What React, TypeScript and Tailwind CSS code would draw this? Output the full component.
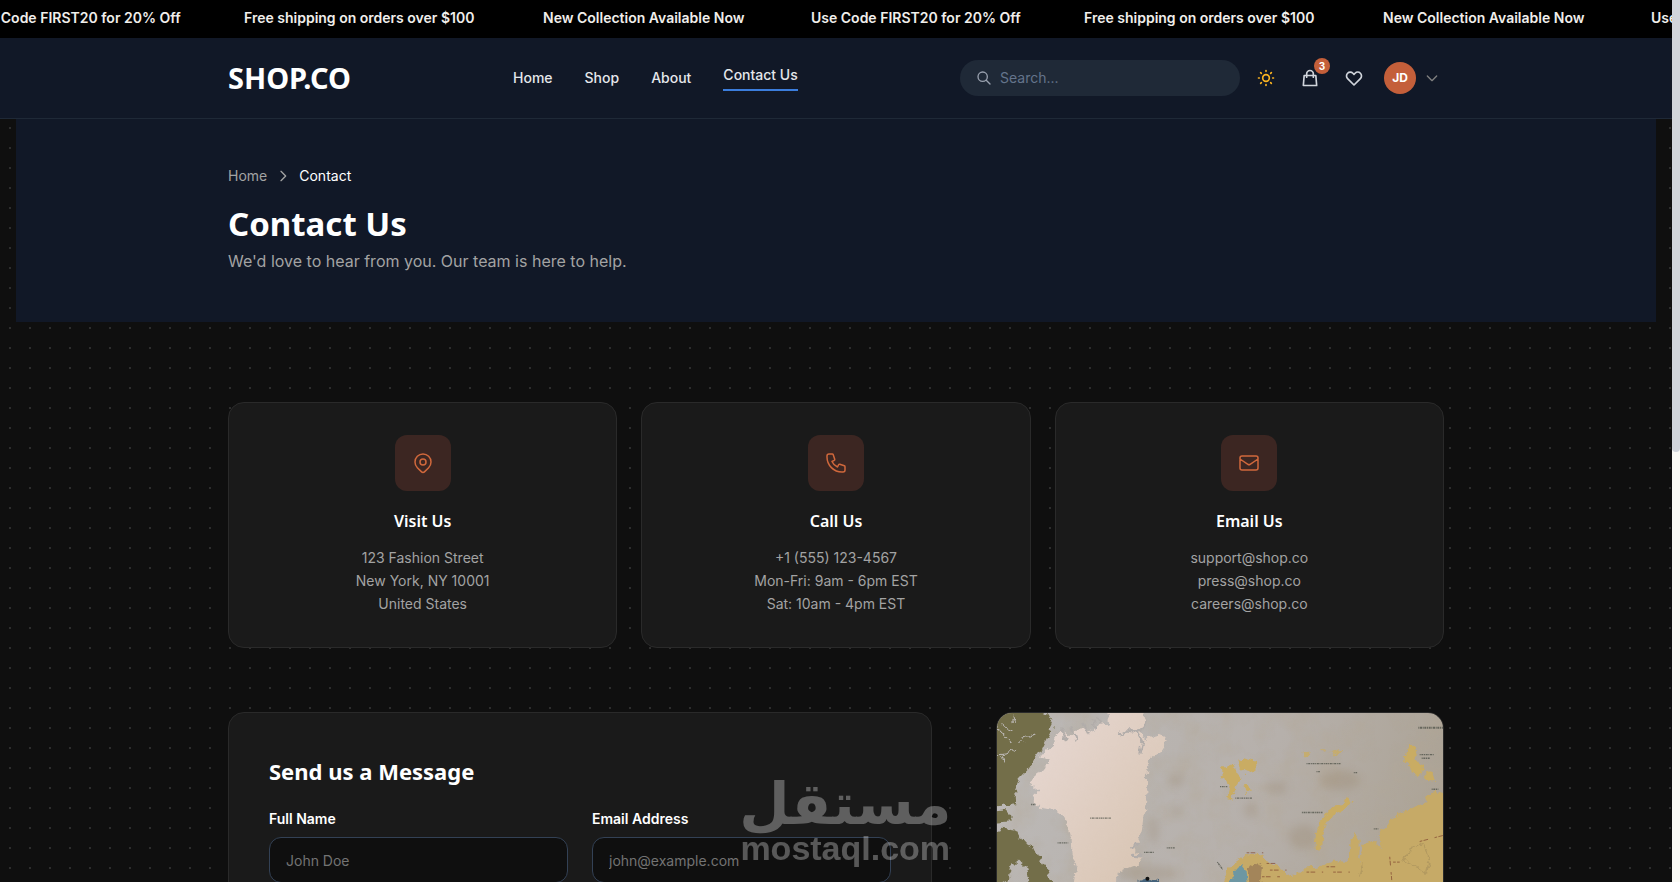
import { useState } from "react";
import type { ReactNode } from "react";
import {
  HiOutlineChevronDown,
  HiOutlineChevronRight,
  HiOutlineHeart,
  HiOutlineLocationMarker,
  HiOutlineMail,
  HiOutlinePhone,
  HiOutlineSearch,
  HiOutlineShoppingBag,
  HiOutlineSun,
} from "react-icons/hi";

const promos = [
  { text: "Use Code FIRST20 for 20% Off", width: "w-[273px]" },
  { text: "Free shipping on orders over $100", width: "w-[299px]" },
  { text: "New Collection Available Now", width: "w-[268px]" },
];

const navLinks = [
  { label: "Home", href: "#home" },
  { label: "Shop", href: "#shop" },
  { label: "About", href: "#about" },
  { label: "Contact Us", href: "#contact", active: true },
];

const contactCards = [
  {
    title: "Visit Us",
    icon: <HiOutlineLocationMarker className="size-6 [&_path]:stroke-[1.5]" />,
    lines: ["123 Fashion Street", "New York, NY 10001", "United States"],
  },
  {
    title: "Call Us",
    icon: <HiOutlinePhone className="size-6 [&_path]:stroke-[1.5]" />,
    lines: ["+1 (555) 123-4567", "Mon-Fri: 9am - 6pm EST", "Sat: 10am - 4pm EST"],
  },
  {
    title: "Email Us",
    icon: <HiOutlineMail className="size-6 [&_path]:stroke-[1.5]" />,
    lines: ["support@shop.co", "press@shop.co", "careers@shop.co"],
  },
];

function PromoBar() {
  return (
    <div className="h-[38px] overflow-hidden bg-black">
      <div className="-ml-[29px] flex h-9 w-max items-center text-sm font-semibold text-[#f0eeeb]">
        {[...promos, ...promos, promos[0]].map((promo, i) => (
          <span key={i} className={`shrink-0 whitespace-nowrap ${promo.width}`}>
            {promo.text}
          </span>
        ))}
      </div>
    </div>
  );
}

function IconButton({ label, children }: { label: string; children: ReactNode }) {
  return (
    <button type="button" aria-label={label} className="relative rounded-full p-2">
      {children}
    </button>
  );
}

function Header() {
  return (
    <header className="border-b border-[#1f2937] bg-[#111827]">
      <div className="mx-auto flex h-20 max-w-7xl items-center justify-between px-8">
        <a href="#home" className="w-[285px] font-['Noto_Sans'] text-[29px] font-bold text-white">
          SHOP.CO
        </a>
        <nav className="flex flex-1 items-center gap-8 text-sm font-medium text-gray-200">
          {navLinks.map((link) => (
            <a
              key={link.label}
              href={link.href}
              className={link.active ? "border-b-2 border-[#3b7ddd] pb-1" : ""}
            >
              {link.label}
            </a>
          ))}
        </nav>
        <div className="flex items-center gap-2">
          <label className="flex h-9 w-[280px] items-center gap-2 rounded-full bg-[#1f2937] px-4 text-gray-400">
            <HiOutlineSearch className="size-4 shrink-0" />
            <input
              type="search"
              aria-label="Search"
              placeholder="Search..."
              className="w-full bg-transparent text-sm text-white outline-none placeholder:text-[#64748b]"
            />
          </label>
          <IconButton label="Toggle theme">
            <HiOutlineSun className="size-5 text-[#fbb320]" />
          </IconButton>
          <IconButton label="Cart">
            <HiOutlineShoppingBag className="size-5 text-gray-300" />
            <span className="absolute -top-0.5 -right-0.5 flex size-4 items-center justify-center rounded-full bg-[#c45f3a] text-[10px] font-bold text-white">
              3
            </span>
          </IconButton>
          <IconButton label="Wishlist">
            <HiOutlineHeart className="size-5 text-gray-300" />
          </IconButton>
          <button type="button" aria-label="Account" className="flex items-center gap-2 p-1">
            <span className="flex size-8 items-center justify-center rounded-full bg-[#c45f3a] text-xs font-bold text-white">
              JD
            </span>
            <HiOutlineChevronDown className="size-4 text-[#808080]" />
          </button>
        </div>
      </div>
    </header>
  );
}

function Hero() {
  return (
    <section className="mx-4 bg-[#111827] py-12">
      <div className="mx-auto max-w-7xl px-8">
        <nav aria-label="Breadcrumb" className="flex items-center gap-2 text-sm leading-[18px]">
          <a href="#home" className="text-[#a3a3a3]">
            Home
          </a>
          <HiOutlineChevronRight className="size-4 text-[#a3a3a3]" />
          <span className="text-white">Contact</span>
        </nav>
        <h1 className="mt-4 mb-0.5 font-['Noto_Sans'] text-[33px] leading-[45px] font-bold text-white">Contact Us</h1>
        <p className="text-base leading-[26px] text-[#a3a3a3]">
          We'd love to hear from you. Our team is here to help.
        </p>
      </div>
    </section>
  );
}

function ContactCards() {
  return (
    <div className="grid grid-cols-3 gap-6">
      {contactCards.map((card) => (
        <div key={card.title} className="rounded-2xl border border-[#2a2a2a] bg-[#1a1a1a] p-8 text-center">
          <div className="mx-auto mb-4 flex size-14 items-center justify-center rounded-xl bg-[#3c2622] text-[#d0683c]">
            {card.icon}
          </div>
          <h3 className="mb-2.5 font-['Noto_Sans'] text-base leading-[29px] font-semibold text-white">{card.title}</h3>
          {card.lines.map((line) => (
            <p key={line} className="text-sm leading-[23px] text-[#a3a3a3]">
              {line}
            </p>
          ))}
        </div>
      ))}
    </div>
  );
}

function Field({ id, label, type, placeholder }: { id: string; label: string; type: string; placeholder: string }) {
  return (
    <div>
      <label htmlFor={id} className="mb-2 block text-sm font-semibold text-white">
        {label}
      </label>
      <input
        id={id}
        type={type}
        placeholder={placeholder}
        className="h-[46px] w-full rounded-xl border border-[#334155] bg-[#0f0f0f] px-4 text-sm text-white outline-none placeholder:text-[#737373]"
      />
    </div>
  );
}

function MessageForm() {
  const [sent, setSent] = useState(false);
  return (
    <form
      className="col-span-3 rounded-2xl border border-[#2a2a2a] bg-[#1a1a1a] p-10"
      onSubmit={(e) => {
        e.preventDefault();
        setSent(!sent);
      }}
    >
      <h2 className="mb-5 font-['Noto_Sans'] text-[22px] leading-9 font-bold text-white">Send us a Message</h2>
      <div className="grid grid-cols-2 gap-6 pb-40">
        <Field id="name" label="Full Name" type="text" placeholder="John Doe" />
        <Field id="email" label="Email Address" type="email" placeholder="john@example.com" />
      </div>
    </form>
  );
}

function VintageMap() {
  return (
    <svg
      role="img"
      aria-label="Map"
      viewBox="50 38 1340 1200"
      preserveAspectRatio="xMinYMin slice"
      className="h-full w-full"
    >
      <defs>
        <linearGradient id="sea" x1="0" y1="0" x2="1" y2="0.3">
          <stop offset="0" stopColor="#bcb9b7" />
          <stop offset="0.6" stopColor="#b6b0ab" />
          <stop offset="1" stopColor="#aba294" />
        </linearGradient>
        <linearGradient id="ice" x1="0" y1="0" x2="1" y2="1">
          <stop offset="0" stopColor="#e8d9d4" />
          <stop offset="1" stopColor="#d6c2ae" />
        </linearGradient>
        <filter id="soft" x="-50%" y="-50%" width="200%" height="200%">
          <feGaussianBlur stdDeviation="12" />
        </filter>
        <filter id="ragged" x="-5%" y="-5%" width="110%" height="110%" colorInterpolationFilters="sRGB">
          <feTurbulence type="fractalNoise" baseFrequency="0.05" numOctaves="3" seed="4" />
          <feDisplacementMap in="SourceGraphic" scale="24" xChannelSelector="R" yChannelSelector="G" />
        </filter>
        <filter id="paper" x="0" y="0" width="100%" height="100%">
          <feTurbulence type="fractalNoise" baseFrequency="0.012" numOctaves="5" seed="9" />
          <feColorMatrix values="0 0 0 0 0.45  0 0 0 0 0.38  0 0 0 0 0.28  0 0 0 1.4 -0.55" />
        </filter>
      </defs>
      <rect x="50" y="38" width="1340" height="1200" fill="url(#sea)" />
      <rect x="50" y="38" width="1340" height="1200" filter="url(#paper)" opacity="0.5" />
      <g fill="#8c7351" opacity="0.2" filter="url(#soft)">
        <ellipse cx="590" cy="240" rx="26" ry="20" />
        <ellipse cx="590" cy="333" rx="18" ry="14" />
        <ellipse cx="520" cy="390" rx="16" ry="40" />
        <ellipse cx="812" cy="330" rx="20" ry="24" />
        <ellipse cx="890" cy="262" rx="34" ry="20" />
        <ellipse cx="970" cy="410" rx="44" ry="36" />
        <ellipse cx="500" cy="520" rx="90" ry="24" />
        <ellipse cx="1080" cy="240" rx="60" ry="30" />
      </g>
      <g filter="url(#ragged)">
        {/* Canadian islands */}
        <path
          fill="#736e49"
          d="M30 20 H150 L205 45 L220 75 L200 112 L182 150 L160 180 L146 205 L118 235 L104 270 L108 312 L50 318 L30 318 Z M30 335 L82 330 L94 348 L86 364 L30 368 Z M30 400 L70 386 L108 392 L124 420 L160 440 L178 478 L200 505 L218 560 H150 L140 500 L116 478 L92 500 L84 545 L30 560 Z"
        />
        <g fill="none" stroke="#b8b4b0" strokeWidth="4">
          <path d="M48 78 L96 128 M62 70 L90 96 M96 40 L102 62 M50 164 L84 160 L104 150 M120 120 L172 100 M60 172 L76 186" />
        </g>
        {/* Greenland */}
        <path
          fill="url(#ice)"
          d="M378 20 L486 28 L496 62 L482 90 L494 120 L520 110 L548 102 L560 122 L540 152 L508 178 L500 220 L502 282 L490 350 L484 400 L460 450 L488 470 L470 494 L440 506 L410 520 L396 580 H276 L288 500 L274 460 L270 400 L252 352 L222 330 L178 322 L156 290 L176 272 L148 250 L160 228 L190 208 L212 178 L182 172 L200 148 L224 136 L222 108 L240 90 L270 108 L290 92 L320 88 L330 96 L362 72 L388 70 Z"
        />
        <g fill="none" stroke="#b2adaa" strokeWidth="7">
          <path d="M240 82 L262 122 M272 78 L288 118 M306 62 L326 104 M340 54 L344 84 M416 104 L440 90 L482 90 L500 60 M440 90 L470 94 L486 124 L478 160 M350 42 L364 76 M450 450 L474 428 M456 464 L488 466" />
        </g>
      </g>
      <g fill="#c9ac63" filter="url(#ragged)">
        <path d="M722 204 L742 204 L750 192 L766 200 L770 224 L786 236 L768 262 L756 298 L742 294 L750 262 L738 244 L726 236 Z M772 186 L800 174 L828 182 L830 206 L800 218 L780 204 Z M788 252 L806 252 L812 272 L796 282 Z" />
        <path d="M1004 446 L1008 400 L1024 358 L1048 328 L1082 308 L1108 292 L1118 308 L1086 332 L1056 348 L1038 376 L1026 420 L1022 452 Z" />
        <path d="M1286 134 L1308 138 L1314 164 L1302 180 L1326 190 L1332 214 L1312 232 L1298 214 L1288 192 L1276 182 Z M1338 220 L1358 216 L1366 238 L1344 250 Z" />
        <path d="M1052 156 L1066 148 L1090 146 L1072 166 Z M968 156 L996 154 L990 168 L970 168 Z M1022 146 L1040 148 L1036 154 Z" opacity="0.8" />
      </g>
      {/* Eurasia */}
      <g filter="url(#ragged)">
        <path
          fill="#c6aa67"
          d="M722 560 L742 512 L768 484 L800 462 L850 466 L856 484 L908 506 L922 528 L952 520 L974 502 L1012 500 L1060 482 L1104 486 L1110 420 L1128 402 L1140 420 L1138 490 L1152 432 L1186 422 L1206 446 L1200 394 L1226 378 L1240 346 L1280 330 L1340 308 L1340 284 L1370 274 L1410 290 V1250 H700 Z"
        />
        <path fill="#a3855a" d="M806 502 L832 486 L846 506 L838 560 H808 Z" />
        <path fill="#6d97a3" d="M750 560 L760 520 L784 492 L800 512 L804 560 Z" />
        <path fill="#44627a" d="M478 542 L500 536 L540 544 L544 560 H480 Z" />
        <path fill="none" stroke="#b39a60" strokeWidth="4" d="M1270 480 L1300 440 L1330 430 L1350 480 L1340 520 L1310 500 Z M1140 530 L1150 490" />
      </g>
      {/* place marks */}
      <g fill="none" stroke="#80452f" strokeWidth="3" strokeDasharray="8 4 14 20" opacity="0.7">
        <path d="M860 490 H900 M870 510 H920 M846 530 H900 M980 516 H1030 M1040 500 H1086 M1230 470 L1236 540 M1320 424 L1390 406 M1060 516 H1110 M800 458 H850 M1240 486 H1260" />
      </g>
      <g fill="none" stroke="#4d5148" strokeWidth="4" strokeDasharray="3 2 6 2" opacity="0.75">
        <path d="M1316 82 H1390" strokeWidth="6" />
        <path d="M330 354 H392 M766 294 H818 M980 190 H1084 M966 337 H1028 M1320 163 H1362 M720 259 H742 M1356 267 H1376 M560 443 H584 M492 457 H522 M232 428 H264 M1326 174 H1352 M1010 214 H1020 M1122 217 H1132 M152 313 H166 M1182 386 H1196 M712 486 L728 508" />
      </g>
      <circle cx="502" cy="536" r="6" fill="#111" />
    </svg>
  );
}

function Watermark() {
  return (
    <div
      dir="ltr"
      className="pointer-events-none absolute bottom-4 left-[44%] flex flex-col items-center text-white opacity-30"
    >
      <span lang="ar" dir="rtl" className="-mb-1 font-['DejaVu_Sans'] text-[58px] leading-[60px] font-bold">
        مستقل
      </span>
      <span className="font-['Liberation_Sans'] text-[34px] leading-9 font-bold">mostaql.com</span>
    </div>
  );
}

export default function App() {
  return (
    <div className="relative flex h-screen overflow-hidden font-[Inter,sans-serif]">
      <div className="flex-1 overflow-hidden bg-[#0f0f0f]">
        <PromoBar />
        <Header />
        <main className="bg-[radial-gradient(circle,#2d2d2d_1px,transparent_1px)] bg-[length:20px_20px] bg-[position:0_-1px]">
          <Hero />
          <div className="mx-auto flex max-w-7xl flex-col gap-16 px-8 py-20">
            <ContactCards />
            <div className="grid grid-cols-5 gap-16">
              <MessageForm />
              <div className="col-span-2 h-[400px] overflow-hidden rounded-2xl border border-[#2a2a2a]">
                <VintageMap />
              </div>
            </div>
          </div>
        </main>
      </div>
      <div aria-hidden="true" className="w-2 bg-[#fafaf5]">
        <div className="h-[452px] rounded-b-full bg-[#d1d5db]" />
      </div>
      <Watermark />
    </div>
  );
}
